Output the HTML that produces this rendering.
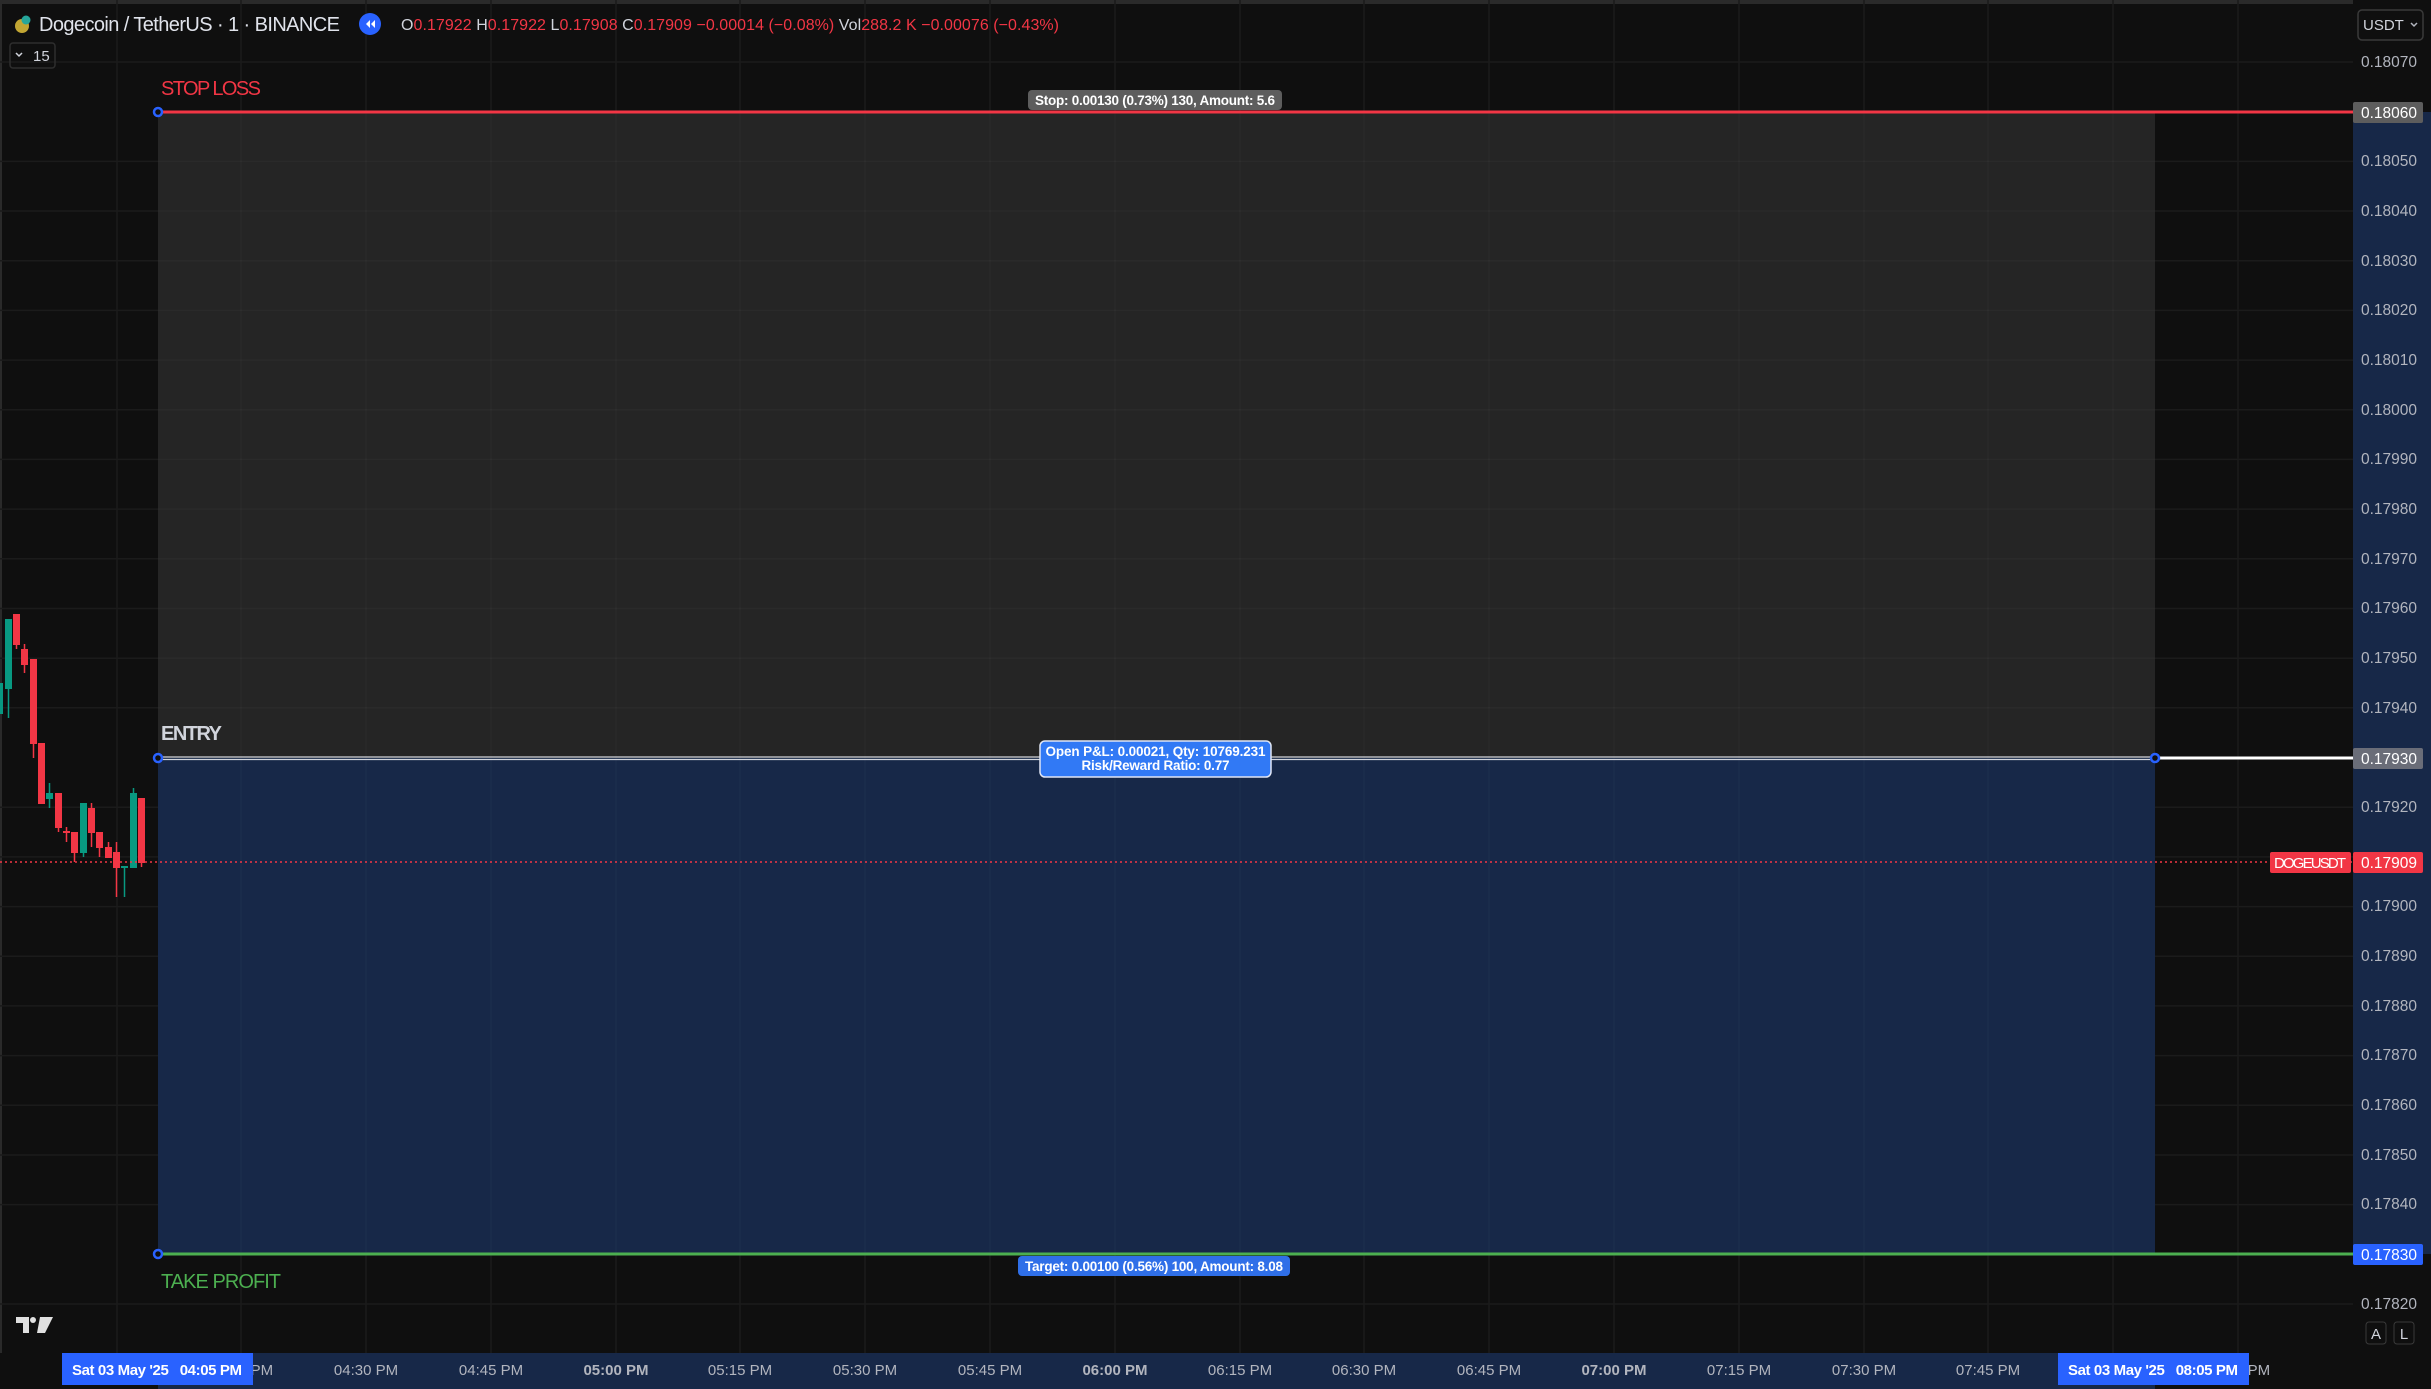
<!DOCTYPE html>
<html><head><meta charset="utf-8"><style>
html,body{margin:0;padding:0;background:#0f0f0f;overflow:hidden}
svg{display:block;font-family:"Liberation Sans",sans-serif}
</style></head><body>
<svg width="2431" height="1389" viewBox="0 0 2431 1389" xmlns="http://www.w3.org/2000/svg">
<rect width="2431" height="1389" fill="#0f0f0f"/>
<rect width="2431" height="4" fill="#2a2a2a"/>
<rect x="0" y="0" width="2" height="1389" fill="#2a2a2a"/>
<!-- grid -->
<g stroke="#1b1b1b" stroke-width="1.5">
<line x1="117" y1="0" x2="117" y2="1353"/><line x1="241" y1="0" x2="241" y2="1353"/><line x1="366" y1="0" x2="366" y2="1353"/><line x1="491" y1="0" x2="491" y2="1353"/><line x1="616" y1="0" x2="616" y2="1353"/><line x1="740" y1="0" x2="740" y2="1353"/><line x1="865" y1="0" x2="865" y2="1353"/><line x1="990" y1="0" x2="990" y2="1353"/><line x1="1115" y1="0" x2="1115" y2="1353"/><line x1="1240" y1="0" x2="1240" y2="1353"/><line x1="1364" y1="0" x2="1364" y2="1353"/><line x1="1489" y1="0" x2="1489" y2="1353"/><line x1="1614" y1="0" x2="1614" y2="1353"/><line x1="1739" y1="0" x2="1739" y2="1353"/><line x1="1864" y1="0" x2="1864" y2="1353"/><line x1="1988" y1="0" x2="1988" y2="1353"/><line x1="2113" y1="0" x2="2113" y2="1353"/><line x1="2238" y1="0" x2="2238" y2="1353"/>
<line x1="0" y1="62" x2="2353" y2="62"/><line x1="0" y1="161.4" x2="2353" y2="161.4"/><line x1="0" y1="211" x2="2353" y2="211"/><line x1="0" y1="260.7" x2="2353" y2="260.7"/><line x1="0" y1="310.4" x2="2353" y2="310.4"/><line x1="0" y1="360.1" x2="2353" y2="360.1"/><line x1="0" y1="409.8" x2="2353" y2="409.8"/><line x1="0" y1="459.4" x2="2353" y2="459.4"/><line x1="0" y1="509.1" x2="2353" y2="509.1"/><line x1="0" y1="558.8" x2="2353" y2="558.8"/><line x1="0" y1="608.5" x2="2353" y2="608.5"/><line x1="0" y1="658.2" x2="2353" y2="658.2"/><line x1="0" y1="707.8" x2="2353" y2="707.8"/><line x1="0" y1="807.2" x2="2353" y2="807.2"/><line x1="0" y1="856.9" x2="2353" y2="856.9"/><line x1="0" y1="906.6" x2="2353" y2="906.6"/><line x1="0" y1="956.2" x2="2353" y2="956.2"/><line x1="0" y1="1005.9" x2="2353" y2="1005.9"/><line x1="0" y1="1055.6" x2="2353" y2="1055.6"/><line x1="0" y1="1105.3" x2="2353" y2="1105.3"/><line x1="0" y1="1155" x2="2353" y2="1155"/><line x1="0" y1="1204.6" x2="2353" y2="1204.6"/><line x1="0" y1="1304" x2="2353" y2="1304"/>
</g>
<!-- position boxes -->
<rect x="158" y="112" width="1997" height="646" fill="#252525"/>
<rect x="158" y="758" width="1997" height="496" fill="#172848"/>
<g stroke="#ffffff" stroke-opacity="0.025" stroke-width="1.5">
<line x1="241" y1="112" x2="241" y2="1254"/><line x1="366" y1="112" x2="366" y2="1254"/><line x1="491" y1="112" x2="491" y2="1254"/><line x1="616" y1="112" x2="616" y2="1254"/><line x1="740" y1="112" x2="740" y2="1254"/><line x1="865" y1="112" x2="865" y2="1254"/><line x1="990" y1="112" x2="990" y2="1254"/><line x1="1115" y1="112" x2="1115" y2="1254"/><line x1="1240" y1="112" x2="1240" y2="1254"/><line x1="1364" y1="112" x2="1364" y2="1254"/><line x1="1489" y1="112" x2="1489" y2="1254"/><line x1="1614" y1="112" x2="1614" y2="1254"/><line x1="1739" y1="112" x2="1739" y2="1254"/><line x1="1864" y1="112" x2="1864" y2="1254"/><line x1="1988" y1="112" x2="1988" y2="1254"/><line x1="2113" y1="112" x2="2113" y2="1254"/>
<line x1="158" y1="161.4" x2="2155" y2="161.4"/><line x1="158" y1="211" x2="2155" y2="211"/><line x1="158" y1="260.7" x2="2155" y2="260.7"/><line x1="158" y1="310.4" x2="2155" y2="310.4"/><line x1="158" y1="360.1" x2="2155" y2="360.1"/><line x1="158" y1="409.8" x2="2155" y2="409.8"/><line x1="158" y1="459.4" x2="2155" y2="459.4"/><line x1="158" y1="509.1" x2="2155" y2="509.1"/><line x1="158" y1="558.8" x2="2155" y2="558.8"/><line x1="158" y1="608.5" x2="2155" y2="608.5"/><line x1="158" y1="658.2" x2="2155" y2="658.2"/><line x1="158" y1="707.8" x2="2155" y2="707.8"/>
</g>
<!-- candles -->
<g>
<rect x="0" y="683" width="3" height="31" fill="#089981"/>
<line x1="8.5" y1="689" x2="8.5" y2="718" stroke="#089981" stroke-width="1.5"/><rect x="5" y="619" width="7" height="70" fill="#089981"/>
<line x1="16.5" y1="645" x2="16.5" y2="649" stroke="#f23645" stroke-width="1.5"/><rect x="13" y="614" width="7" height="31" fill="#f23645"/>
<line x1="24.5" y1="644" x2="24.5" y2="673" stroke="#f23645" stroke-width="1.5"/><rect x="21" y="649" width="7" height="16" fill="#f23645"/>
<line x1="33.5" y1="744" x2="33.5" y2="758" stroke="#f23645" stroke-width="1.5"/><rect x="30" y="659" width="7" height="85" fill="#f23645"/>
<rect x="38" y="743" width="7" height="61" fill="#f23645"/>
<line x1="49.5" y1="783" x2="49.5" y2="808" stroke="#089981" stroke-width="1.5"/><rect x="46" y="793" width="7" height="6" fill="#089981"/>
<line x1="58.5" y1="828" x2="58.5" y2="832" stroke="#f23645" stroke-width="1.5"/><rect x="55" y="793" width="7" height="35" fill="#f23645"/>
<line x1="66.5" y1="827" x2="66.5" y2="842" stroke="#f23645" stroke-width="1.5"/><rect x="63" y="831" width="7" height="2" fill="#f23645"/>
<line x1="74.5" y1="853" x2="74.5" y2="862" stroke="#f23645" stroke-width="1.5"/><rect x="71" y="832" width="7" height="21" fill="#f23645"/>
<line x1="83.5" y1="853" x2="83.5" y2="857" stroke="#089981" stroke-width="1.5"/><rect x="80" y="803" width="7" height="50" fill="#089981"/>
<line x1="91.5" y1="803" x2="91.5" y2="847" stroke="#f23645" stroke-width="1.5"/><rect x="88" y="808" width="7" height="25" fill="#f23645"/>
<line x1="99.5" y1="832" x2="99.5" y2="857" stroke="#f23645" stroke-width="1.5"/><rect x="96" y="832" width="7" height="16" fill="#f23645"/>
<line x1="108.5" y1="842" x2="108.5" y2="858" stroke="#f23645" stroke-width="1.5"/><rect x="105" y="847" width="7" height="11" fill="#f23645"/>
<line x1="116.5" y1="842" x2="116.5" y2="897" stroke="#f23645" stroke-width="1.5"/><rect x="113" y="852" width="7" height="16" fill="#f23645"/>
<line x1="124.5" y1="867" x2="124.5" y2="897" stroke="#089981" stroke-width="1.5"/><rect x="121" y="866" width="7" height="2" fill="#089981"/>
<line x1="133.5" y1="788" x2="133.5" y2="868" stroke="#089981" stroke-width="1.5"/><rect x="130" y="793" width="7" height="75" fill="#089981"/>
<line x1="141.5" y1="863" x2="141.5" y2="867" stroke="#f23645" stroke-width="1.5"/><rect x="138" y="798" width="7" height="65" fill="#f23645"/>
</g>
<line x1="0" y1="862" x2="2353" y2="862" stroke="#f23645" stroke-width="1.5" stroke-dasharray="2 3"/>
<line x1="158" y1="112" x2="2353" y2="112" stroke="#f23645" stroke-width="3"/>
<line x1="158" y1="757" x2="2155" y2="757" stroke="#d1d4dc" stroke-width="1.2"/>
<line x1="158" y1="759.5" x2="2155" y2="759.5" stroke="#d1d4dc" stroke-width="1.2"/>
<line x1="2155" y1="758" x2="2353" y2="758" stroke="#ffffff" stroke-width="3"/>
<line x1="158" y1="1254" x2="2353" y2="1254" stroke="#4caf50" stroke-width="3"/>
<g fill="#0f0f0f" stroke="#2962ff" stroke-width="2.5">
<circle cx="158" cy="112" r="4"/><circle cx="158" cy="758" r="4"/><circle cx="2155" cy="758" r="4"/><circle cx="158" cy="1254" r="4"/>
</g>
<text x="161" y="95" font-size="20" fill="#f23645" textLength="100">STOP LOSS</text>
<text x="161" y="740" font-size="20" fill="#d1d4dc" font-weight="bold" textLength="61">ENTRY</text>
<text x="161" y="1288" font-size="20" fill="#4caf50" textLength="120">TAKE PROFIT</text>
<rect x="1028" y="90" width="254" height="20" rx="4" fill="#5d5d5d"/>
<text x="1155" y="105" font-size="13.5" fill="#fff" text-anchor="middle" font-weight="bold" textLength="240">Stop: 0.00130 (0.73%) 130, Amount: 5.6</text>
<rect x="1040" y="741" width="231" height="36" rx="5" fill="#3179f5" stroke="#e0e6f5" stroke-width="1.5"/>
<text x="1155.5" y="756" font-size="13.5" fill="#fff" text-anchor="middle" font-weight="bold" textLength="220">Open P&amp;L: 0.00021, Qty: 10769.231</text>
<text x="1155.5" y="770" font-size="13.5" fill="#fff" text-anchor="middle" font-weight="bold" textLength="148">Risk/Reward Ratio: 0.77</text>
<rect x="1018" y="1256" width="272" height="20" rx="4" fill="#2f6fe8"/>
<text x="1154" y="1271" font-size="13.5" fill="#fff" text-anchor="middle" font-weight="bold" textLength="258">Target: 0.00100 (0.56%) 100, Amount: 8.08</text>
<!-- price axis -->
<rect x="2353" y="0" width="78" height="1353" fill="#0f0f0f"/>
<rect x="2353" y="112" width="78" height="1142" fill="#172848"/>
<g font-size="15.5" fill="#b2b5be" text-anchor="middle">
<text x="2389" y="67">0.18070</text><text x="2389" y="166">0.18050</text><text x="2389" y="216">0.18040</text><text x="2389" y="266">0.18030</text><text x="2389" y="315">0.18020</text><text x="2389" y="365">0.18010</text><text x="2389" y="415">0.18000</text><text x="2389" y="464">0.17990</text><text x="2389" y="514">0.17980</text><text x="2389" y="564">0.17970</text><text x="2389" y="613">0.17960</text><text x="2389" y="663">0.17950</text><text x="2389" y="713">0.17940</text><text x="2389" y="812">0.17920</text><text x="2389" y="911">0.17900</text><text x="2389" y="961">0.17890</text><text x="2389" y="1011">0.17880</text><text x="2389" y="1060">0.17870</text><text x="2389" y="1110">0.17860</text><text x="2389" y="1160">0.17850</text><text x="2389" y="1209">0.17840</text><text x="2389" y="1309">0.17820</text>
</g>
<rect x="2353" y="102" width="70" height="21" rx="2" fill="#5d5d5d"/>
<text x="2389" y="118" font-size="15.5" fill="#fff" text-anchor="middle">0.18060</text>
<rect x="2353" y="748" width="70" height="21" rx="2" fill="#6a6d78"/>
<text x="2389" y="764" font-size="15.5" fill="#fff" text-anchor="middle">0.17930</text>
<rect x="2270" y="852" width="81" height="21" rx="2" fill="#f23645"/>
<text x="2310" y="868" font-size="15" fill="#fff" text-anchor="middle" textLength="72">DOGEUSDT</text>
<rect x="2353" y="852" width="70" height="21" rx="2" fill="#f23645"/>
<text x="2389" y="868" font-size="15.5" fill="#fff" text-anchor="middle">0.17909</text>
<rect x="2353" y="1244" width="70" height="21" rx="2" fill="#2962ff"/>
<text x="2389" y="1260" font-size="15.5" fill="#fff" text-anchor="middle">0.17830</text>
<rect x="2358" y="10" width="65" height="30" rx="4" fill="none" stroke="#3a3a3a" stroke-width="1.5"/>
<text x="2363" y="30" font-size="15" fill="#d1d4dc">USDT</text>
<path d="M2411 23 l3 3 l3 -3" fill="none" stroke="#b2b5be" stroke-width="1.5"/>
<rect x="2366" y="1322" width="20" height="22" rx="3" fill="none" stroke="#3a3a3a"/>
<text x="2376" y="1339" font-size="15" fill="#d1d4dc" text-anchor="middle">A</text>
<rect x="2394" y="1322" width="20" height="22" rx="3" fill="none" stroke="#3a3a3a"/>
<text x="2404" y="1339" font-size="15" fill="#d1d4dc" text-anchor="middle">L</text>
<circle cx="2390" cy="1370" r="6" fill="none" stroke="#b2b5be" stroke-width="1.5"/>
<circle cx="2390" cy="1370" r="2" fill="#b2b5be"/>
<!-- time axis -->
<rect x="0" y="1353" width="2431" height="36" fill="#0f0f0f"/>
<rect x="158" y="1353" width="1997" height="36" fill="#172848"/>
<g font-size="15" fill="#b2b5be" text-anchor="middle">
<text x="241" y="1375">04:15 PM</text><text x="366" y="1375">04:30 PM</text><text x="491" y="1375">04:45 PM</text><text x="616" y="1375" font-weight="bold">05:00 PM</text><text x="740" y="1375">05:15 PM</text><text x="865" y="1375">05:30 PM</text><text x="990" y="1375">05:45 PM</text><text x="1115" y="1375" font-weight="bold">06:00 PM</text><text x="1240" y="1375">06:15 PM</text><text x="1364" y="1375">06:30 PM</text><text x="1489" y="1375">06:45 PM</text><text x="1614" y="1375" font-weight="bold">07:00 PM</text><text x="1739" y="1375">07:15 PM</text><text x="1864" y="1375">07:30 PM</text><text x="1988" y="1375">07:45 PM</text><text x="2238" y="1375">08:15 PM</text>
</g>
<rect x="62" y="1353" width="191" height="32" fill="#2962ff"/>
<text x="157" y="1375" font-size="15" fill="#fff" text-anchor="middle" font-weight="bold" xml:space="preserve" textLength="170">Sat 03 May '25   04:05 PM</text>
<rect x="2058" y="1353" width="191" height="32" fill="#2962ff"/>
<text x="2153" y="1375" font-size="15" fill="#fff" text-anchor="middle" font-weight="bold" xml:space="preserve" textLength="170">Sat 03 May '25   08:05 PM</text>
<g fill="#e0e0e0">
<path d="M16 1317 h13 v16 h-6 v-10 h-7z"/><circle cx="33" cy="1320" r="3"/><path d="M40 1317 h13 l-8 16 h-8z"/>
</g>
<!-- header -->
<circle cx="22" cy="26" r="7" fill="#c2a633"/>
<circle cx="26" cy="20" r="4.5" fill="#26a69a"/>
<text x="39" y="31" font-size="20" fill="#e0e3eb" textLength="301">Dogecoin / TetherUS · 1 · BINANCE</text>
<circle cx="370" cy="24" r="11" fill="#2962ff"/>
<path d="M366 24 l4 -4 v8z M371 24 l4 -4 v8z" fill="#fff"/>
<text x="401" y="30" font-size="16" textLength="658"><tspan fill="#d1d4dc">O</tspan><tspan fill="#f23645">0.17922</tspan><tspan fill="#d1d4dc"> H</tspan><tspan fill="#f23645">0.17922</tspan><tspan fill="#d1d4dc"> L</tspan><tspan fill="#f23645">0.17908</tspan><tspan fill="#d1d4dc"> C</tspan><tspan fill="#f23645">0.17909 −0.00014 (−0.08%)</tspan><tspan fill="#d1d4dc"> Vol</tspan><tspan fill="#f23645">288.2 K −0.00076 (−0.43%)</tspan></text>
<rect x="10" y="43" width="45" height="25" rx="3" fill="none" stroke="#2e2e2e" stroke-width="1.5"/>
<path d="M16 53 l3 3 l3 -3" fill="none" stroke="#d1d4dc" stroke-width="1.5"/>
<text x="33" y="61" font-size="15" fill="#d1d4dc">15</text>
</svg>
</body></html>
